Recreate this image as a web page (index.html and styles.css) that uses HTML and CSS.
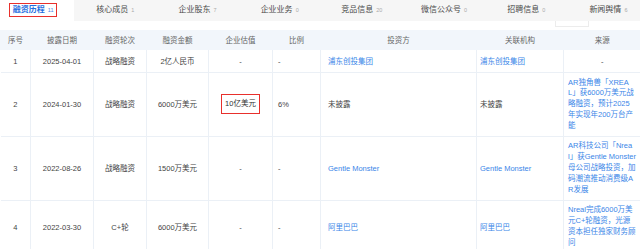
FILE: index.html
```html
<!DOCTYPE html>
<html lang="zh">
<head>
<meta charset="utf-8">
<link rel="stylesheet" href="styles.css">
</head>
<body>
<div class="page">
  <nav class="tabs">
    <div class="tab active"><span class="mark-tab">融资历程<span class="cnt">11</span></span></div>
    <div class="tab">核心成员<span class="cnt">1</span></div>
    <div class="tab">企业股东<span class="cnt">7</span></div>
    <div class="tab">企业业务<span class="cnt">0</span></div>
    <div class="tab">竞品信息<span class="cnt">20</span></div>
    <div class="tab">微信公众号<span class="cnt">0</span></div>
    <div class="tab">招聘信息<span class="cnt">0</span></div>
    <div class="tab">新闻舆情<span class="cnt">6</span></div>
  </nav>
  <div class="peek"></div>
  <table class="grid">
    <colgroup>
      <col class="c-no"><col class="c-date"><col class="c-round"><col class="c-amt"><col class="c-val"><col class="c-ratio"><col class="c-inv"><col class="c-org"><col class="c-src">
    </colgroup>
    <thead>
      <tr>
        <th>序号</th><th>披露日期</th><th>融资轮次</th><th>融资金额</th><th>企业估值</th><th>比例</th><th>投资方</th><th>关联机构</th><th>来源</th>
      </tr>
    </thead>
    <tbody>
      <tr>
        <td class="ctr">1</td><td class="ctr">2025-04-01</td><td class="ctr">战略融资</td><td class="ctr">2亿人民币</td><td class="ctr">-</td><td class="left">-</td>
        <td class="inv"><span class="link">浦东创投集团</span></td><td class="org"><span class="link">浦东创投集团</span></td><td class="ctr">-</td>
      </tr>
      <tr>
        <td class="ctr">2</td><td class="ctr">2024-01-30</td><td class="ctr">战略融资</td><td class="ctr">6000万美元</td><td class="ctr"><span class="mark-val">10亿美元</span></td><td class="left">6%</td>
        <td class="inv">未披露</td><td class="org">未披露</td>
        <td class="src"><div class="link src-text">AR独角兽「XREA<br>L」获6000万美元战<br>略融资，预计2025<br>年实现年200万台产<br>能</div></td>
      </tr>
      <tr>
        <td class="ctr">3</td><td class="ctr">2022-08-26</td><td class="ctr">战略融资</td><td class="ctr">1500万美元</td><td class="ctr">-</td><td class="left">-</td>
        <td class="inv"><span class="link">Gentle Monster</span></td><td class="org"><span class="link">Gentle Monster</span></td>
        <td class="src"><div class="link src-text">AR科技公司「Nrea<br>l」获Gentle Monster<br>母公司战略投资，加<br>码潮流推动消费级A<br>R发展</div></td>
      </tr>
      <tr>
        <td class="ctr">4</td><td class="ctr">2022-03-30</td><td class="ctr">C+轮</td><td class="ctr">6000万美元</td><td class="ctr">-</td><td class="left">-</td>
        <td class="inv"><span class="link">阿里巴巴</span></td><td class="org"><span class="link">阿里巴巴</span></td>
        <td class="src"><div class="link src-text">Nreal完成6000万美<br>元C+轮融资，光源<br>资本担任独家财务顾<br>问</div></td>
      </tr>
    </tbody>
  </table>
</div>
</body>
</html>
```

FILE: styles.css
```css
html, body {
  margin: 0;
  padding: 0;
  background: #ffffff;
}
body {
  font-family: "Liberation Sans", "Noto Sans CJK SC", sans-serif;
  color: #444;
  overflow: hidden;
}
.page {
  position: relative;
  width: 640px;
  height: 249px;
  overflow: hidden;
}
.tabs {
  display: flex;
  height: 21px;
  background: #f6f6f6;
  margin-left: -8px;
  width: 648px;
}
.tab {
  flex: 0 0 82.2px;
  text-align: center;
  font-size: 8px;
  line-height: 19px;
  color: #4a4a4a;
  white-space: nowrap;
}
.tab.active {
  background: #ffffff;
  color: #1f6fe0;
  font-weight: bold;
}
.cnt {
  font-size: 5.5px;
  color: #aaa;
  font-weight: normal;
  margin-left: 3px;
}
.tab.active .cnt {
  color: #4a8ae8;
}
.mark-tab {
  display: inline-block;
  border: 1.5px solid #e8302c;
  padding: 0 3px;
  line-height: 12px;
}
.peek {
  position: absolute;
  left: 555px;
  top: 21px;
  width: 32px;
  height: 5px;
  border: 1px solid #ececec;
  border-top: none;
  background: #fff;
}
.grid {
  margin-top: 9px;
  width: 640px;
  table-layout: fixed;
  border-collapse: collapse;
  font-size: 7.5px;
}
.c-no { width: 30px; }
.c-date { width: 63px; }
.c-round { width: 53px; }
.c-amt { width: 62px; }
.c-val { width: 64px; }
.c-ratio { width: 48px; }
.c-inv { width: 156px; }
.c-org { width: 87px; }
.c-src { width: 77px; }
th {
  background: #f2f6fb;
  color: #666;
  font-weight: normal;
  height: 20px;
  padding: 0;
  line-height: 13px;
  text-align: center;
  border-left: 1px solid #f2f6fb;
}
td {
  padding: 4.5px 5px;
  line-height: 13px;
  border: 1px solid #ebf0f6;
  border-top: none;
  vertical-align: middle;
  white-space: nowrap;
  overflow: hidden;
}
tbody tr td:first-child { border-left: none; }
tbody tr td:last-child { border-right: none; }
.ctr { text-align: center; }
.left { text-align: left; }
.inv { padding-left: 7px; }
.org { padding-left: 3px; }
.src { padding: 4.5px 4px 4.5px 4px; }
.link { color: #3a86e8; }
.src-text { line-height: 10.8px; }
.mark-val {
  display: inline-block;
  border: 1.5px solid #e8302c;
  padding: 4px 3px;
  color: #333;
  line-height: 10px;
}
```
